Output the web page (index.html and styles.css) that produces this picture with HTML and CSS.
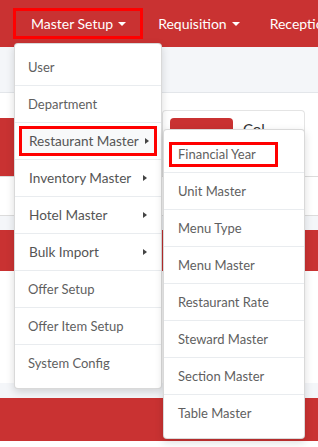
FILE: index.html
```html
<!DOCTYPE html>
<html lang="en">
<head>
    <meta charset="UTF-8">
    <meta name="viewport" content="width=device-width, initial-scale=1.0">
    <title>Master Setup</title>
    <link rel="stylesheet" href="styles.css">
</head>
<body>
    <nav class="navbar">
        <a class="nav-link marked">Master Setup <span class="caret"></span></a>
        <a class="nav-link">Requisition <span class="caret"></span></a>
        <a class="nav-link">Reception</a>
    </nav>

    <div class="content-header"></div>

    <section class="content">
        <div class="top-row">
            <div class="left-col">
                <div class="red-block"></div>
            </div>
            <div class="card">
                <div class="btn-red"></div>
                <span class="card-text">Col</span>
            </div>
        </div>
        <div class="strip"></div>
        <div class="gray-gap"></div>
        <div class="red-band"></div>
        <div class="white-area"></div>
        <div class="gray-gap tall"></div>
        <div class="red-band bottom"></div>
    </section>

    <ul class="dropdown main-menu">
        <li class="item">User</li>
        <li class="item">Department</li>
        <li class="item parent active">
            <span class="mark mark-parent">Restaurant Master</span>
            <span class="arrow"></span>
            <ul class="dropdown sub-menu">
                <li class="item"><span class="mark mark-sub">Financial Year</span></li>
                <li class="item">Unit Master</li>
                <li class="item">Menu Type</li>
                <li class="item">Menu Master</li>
                <li class="item">Restaurant Rate</li>
                <li class="item">Steward Master</li>
                <li class="item">Section Master</li>
                <li class="item">Table Master</li>
            </ul>
        </li>
        <li class="item parent">Inventory Master <span class="arrow"></span></li>
        <li class="item parent">Hotel Master <span class="arrow"></span></li>
        <li class="item parent">Bulk Import <span class="arrow"></span></li>
        <li class="item">Offer Setup</li>
        <li class="item">Offer Item Setup</li>
        <li class="item">System Config</li>
    </ul>
</body>
</html>
```

FILE: styles.css
```css
body {
    font-family: Lato, "Open Sans", sans-serif;
    margin: 0;
    padding: 0;
    background-color: #fff;
    overflow: hidden;
}

/* top bar */
.navbar {
    display: flex;
    align-items: center;
    height: 47px;
    padding-left: 13px;
    background-color: #c93232;
    box-sizing: border-box;
    overflow: hidden;
}

.nav-link {
    display: flex;
    align-items: center;
    height: 31px;
    padding: 0 15px;
    color: #fff;
    font-size: 14px;
    box-sizing: border-box;
    white-space: nowrap;
}

.nav-link.marked {
    border: 3px solid #ff0000;
    padding: 0 14px 0 15px;
}

.caret {
    display: inline-block;
    margin-left: 5px;
    border-top: 4px solid #fff;
    border-left: 4px solid transparent;
    border-right: 4px solid transparent;
}

/* page behind the menus */
.content-header {
    height: 45px;
    background-color: #f4f6f9;
    border-bottom: 1px solid #e3e6ea;
}

.top-row {
    display: flex;
    height: 83px;
}

.left-col {
    width: 162px;
}

.red-block {
    margin-top: 25px;
    height: 58px;
    width: 150px;
    background-color: #c93232;
}

.card {
    display: flex;
    align-items: flex-start;
    gap: 10px;
    width: 143px;
    margin-top: 17px;
    padding: 7px 0 0 7px;
    border: 1px solid #e4e4e4;
    border-bottom: none;
    border-radius: 4px 4px 0 0;
    box-sizing: border-box;
}

.btn-red {
    width: 63px;
    height: 30px;
    border-radius: 4px;
    background-color: #c93232;
}

.card-text {
    color: #333;
    font-size: 15px;
    margin-top: 2px;
}

.strip {
    height: 38px;
    border-top: 1px solid #dcdcdc;
    border-bottom: 1px solid #dcdcdc;
}

.gray-gap {
    height: 14px;
    background-color: #f4f6f9;
}

.gray-gap.tall {
    height: 15px;
}

.red-band {
    height: 41px;
    background-color: #c93232;
}

.red-band.bottom {
    height: 43px;
}

.white-area {
    height: 112px;
}

/* dropdowns */
.dropdown {
    list-style: none;
    margin: 0;
    background-color: #fff;
    border: 1px solid rgba(0, 0, 0, 0.15);
    border-radius: 4px;
    box-shadow: 0 3px 8px rgba(0, 0, 0, 0.15);
    box-sizing: border-box;
}

.main-menu {
    position: absolute;
    left: 14px;
    top: 43px;
    width: 148px;
    padding: 5px 0 7px;
}

.item {
    display: flex;
    align-items: center;
    height: 36px;
    padding-left: 13px;
    color: #5f5f5f;
    font-size: 13px;
    white-space: nowrap;
    border-bottom: 1px solid #e9ecef;
}

.item:last-child {
    border-bottom: none;
}

.item.parent {
    padding-left: 14px;
    font-size: 13.6px;
    color: #555;
}

.arrow {
    margin-left: auto;
    margin-right: 14px;
    border-left: 4px solid #444;
    border-top: 3px solid transparent;
    border-bottom: 3px solid transparent;
}

.item.active {
    padding-left: 4px;
}

.mark {
    display: flex;
    align-items: center;
    box-sizing: border-box;
    border: 3px solid #ff0000;
}

.mark-parent {
    width: 138px;
    height: 30px;
    padding-left: 7px;
    background-color: #f8f9fa;
}

.item.active .arrow {
    position: absolute;
    left: 130px;
}

.sub-menu {
    position: absolute;
    left: 148px;
    top: 85px;
    width: 142px;
    padding: 6px 0 7px;
}

.sub-menu .item {
    padding-left: 14px;
    font-size: 13px;
}

.sub-menu .item:first-child {
    padding-left: 5px;
}

.mark-sub {
    width: 109px;
    height: 25px;
    padding-left: 6px;
}
```
